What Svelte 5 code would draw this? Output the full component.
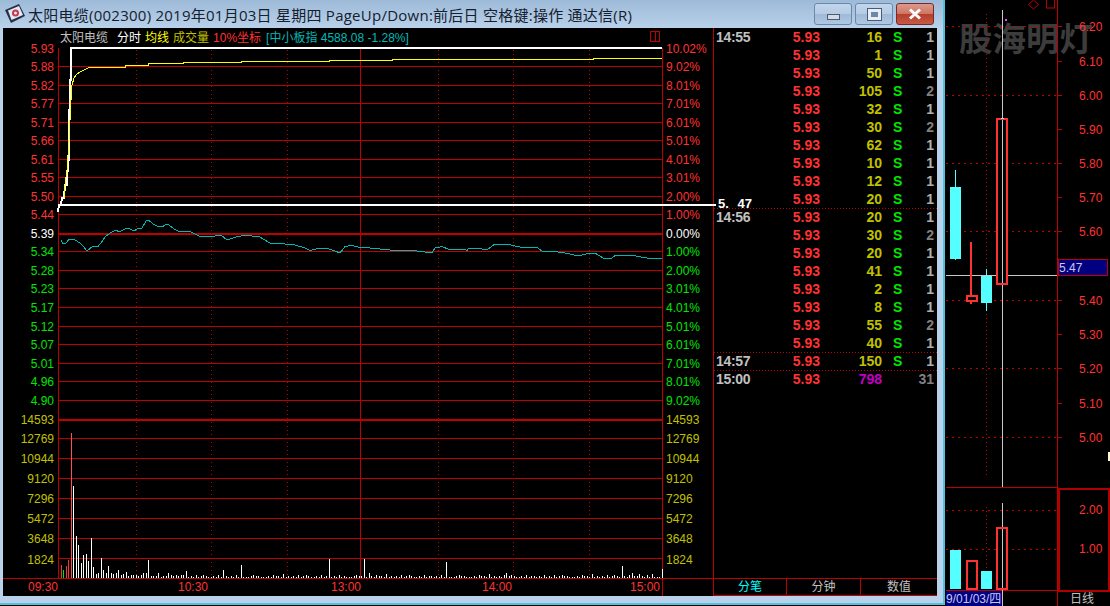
<script>
  const hLines = [66, 85, 103, 122, 140, 159, 177, 196, 214, 251, 270, 288, 307, 326, 344, 363, 381, 400, 438, 458, 478, 498, 518, 538, 558];
  const dotted = [136, 211, 287, 438, 513, 589];

  const prices = [
    ['5.93', 49, 'up'], ['5.88', 67, 'up'], ['5.82', 86, 'up'], ['5.77', 104, 'up'], ['5.71', 123, 'up'],
    ['5.66', 141, 'up'], ['5.61', 160, 'up'], ['5.55', 178, 'up'], ['5.50', 197, 'up'], ['5.44', 215, 'up'],
    ['5.39', 234, 'flat'], ['5.34', 252, 'down'], ['5.28', 271, 'down'], ['5.23', 289, 'down'], ['5.17', 308, 'down'],
    ['5.12', 327, 'down'], ['5.07', 345, 'down'], ['5.01', 364, 'down'], ['4.96', 382, 'down'], ['4.90', 401, 'down']
  ];
  const percents = ['10.02%', '9.02%', '8.01%', '7.01%', '6.01%', '5.01%', '4.01%', '3.01%', '2.00%', '1.00%', '0.00%', '1.00%', '2.00%', '3.01%', '4.01%', '5.01%', '6.01%', '7.01%', '8.01%', '9.02%'];
  const volumes = [['14593', 420], ['12769', 439], ['10944', 459], ['9120', 479], ['7296', 499], ['5472', 519], ['3648', 539], ['1824', 560]];
  const times = [['09:30', 28], ['10:30', 178], ['13:00', 331], ['14:00', 482], ['15:00', 630]];

  const avgLine = '64,198 65,185 67,170 69,140 71,100 72,85 74,78 77,74 82,71 88,68 92,67 125,67 125,65 148,65 148,63 183,63 183,62 241,62 241,61 329,61 329,60 392,60 392,59 593,59 593,58 662,58';
  const priceLine = '58,212 59,205 61,205 62,198 64,198 65,185 67,185 68,160 69,160 69,110 70,110 70,80 71,80 71,48 662,48';
  const indexLine = '61,240 63,244 66,243 69,239.5 75,240 80,243 84,247 87,251 93,246 98,246.5 101,243 105,237 110,233 115,230.5 120,231.5 126,228.5 130,229 134,231 138,228.5 142,228 146,221 149,220.5 153,224 157,226 163,226.5 166,224 169,225 174,229 179,231.5 184,231.5 189,231 194,233.5 199,236 214,236.5 218,235 221,235 227,240 232,238.5 237,236.5 245,235.5 259,236.5 263,239 270,243 279,243.5 285,244 295,245 305,248 310,250.5 318,248.5 327,248.5 335,251 340,253 345,246.5 352,245.5 358,247 370,248 390,250 417,251 432,253 435,248 442,246.5 448,249 465,249 467,250.5 469,248 482,249 488,249 495,244 507,244 513,245.5 522,247.5 537,247.5 542,251 553,251.5 563,252.5 574,255 582,255 590,253 595,253 603,258 611,259 615,255.5 633,255.5 647,258 662,258';

  // first bars by hand, the long quiet part of the day from a digit string
  const firstBars = [13, 8, 12, 18, 145, 92, 42, 33, 15, 23, 24, 17, 40, 11, 4, 5, 20, 8, 5, 12, 5, 4, 5, 8, 3, 4, 6, 2, 3, 3, 3, 2, 3, 5, 5, 18, 2, 2, 2, 5, 1, 2, 2, 5, 3, 2, 3, 2, 3, 3];
  const quiet = '12132214121213123211213122121312111232211';
  const peaks = { 186: 7, 224: 8, 242: 13, 330: 19, 363: 19, 368: 5, 446: 16, 506: 5, 554: 3, 622: 12, 632: 5, 640: 4, 652: 4, 662: 9 };
  const heights = Array.from({ length: 241 }, (_, i) => (i < firstBars.length ? firstBars[i] : Number(quiet[i % quiet.length])));
  for (const x in peaks) heights[Math.round((x - 61) / 2.505)] = peaks[x];
  const bars = heights.map((h, i) => ({
    x: Math.floor(61 + i * 2.505),
    h,
    color: i === 1 ? '#00e600' : i === 0 || i === 2 || i === 3 ? '#ff3232' : i === 4 ? '#ff5050' : '#ffffff'
  }));

  const ticks = [
    ['14:55', 16, 1], ['', 1, 1], ['', 50, 1], ['', 105, 2], ['', 32, 1], ['', 30, 2], ['', 62, 1], ['', 10, 1], ['', 12, 1], ['', 20, 1],
    ['14:56', 20, 1], ['', 30, 2], ['', 20, 1], ['', 41, 1], ['', 2, 1], ['', 8, 1], ['', 55, 2], ['', 40, 1],
    ['14:57', 150, 1]
  ];

  const dayPrices = [['6.20', 27], ['6.10', 62], ['6.00', 96], ['5.90', 130], ['5.80', 164], ['5.70', 198], ['5.60', 232], ['5.40', 301], ['5.30', 335], ['5.20', 369], ['5.10', 404], ['5.00', 438]];
  const dayDots = [26, 95, 163, 231, 300, 368, 437, 510, 549];
</script>

<div class="screen">
  <div class="window">
    <header class="titlebar">
      <svg class="app-icon" viewBox="0 0 20 20" width="20" height="20">
        <path d="M0 6 L14 0 L20 12 L6 19 Z" fill="#24304a" />
        <path d="M3 6.500 L14 2 L18 11 L6.500 16 Z" fill="#e4e8f2" />
        <circle cx="10.500" cy="9" r="3.500" fill="#c43a50" />
        <circle cx="10.500" cy="9" r="1.500" fill="#f6e8ec" />
      </svg>
      <span class="title">太阳电缆(002300) 2019年01月03日 星期四 PageUp/Down:前后日 空格键:操作 通达信(R)</span>
      <div class="controls">
        <div class="btn"><i class="min"></i></div>
        <div class="btn"><i class="max"></i></div>
        <div class="btn close">
          <svg viewBox="0 0 14 12" width="14" height="12"><path d="M2 1.500 L12 10.500 M12 1.500 L2 10.500" stroke="#fff" stroke-width="3" /></svg>
        </div>
      </div>
    </header>

    <div class="main">
      <section class="chart">
        <div class="legend">
          <span class="gray name">太阳电缆</span>
          <span class="white">分时</span>
          <span class="yellow">均线</span>
          <span class="olive">成交量</span>
          <span class="red">10%坐标</span>
          <span class="teal">[中小板指 4588.08 -1.28%]</span>
          <i class="split"></i>
        </div>
        <svg class="plot" viewBox="3 28 710 568" width="710" height="568">
          <g class="grid">
            {#each hLines as y}
              <line x1="58" x2="662" y1={y + 0.5} y2={y + 0.5} />
            {/each}
            <line x1="58" x2="662" y1="234" y2="234" stroke-width="2" />
            <line x1="58" x2="662" y1="420" y2="420" stroke-width="2" />
            <line x1="3" x2="713" y1="578.500" y2="578.500" />
            <line x1="58.500" x2="58.500" y1="48" y2="578" />
            <line x1="662.500" x2="662.500" y1="48" y2="596" />
            <line x1="360.500" x2="360.500" y1="48" y2="578" />
            {#each dotted as x}
              <line class="dot" x1={x + 0.5} x2={x + 0.5} y1="50" y2="578" />
            {/each}
          </g>

          {#each bars as b}
            <rect x={b.x} y={578 - b.h} width="1" height={b.h} fill={b.color} />
          {/each}

          <polyline class="line" points={indexLine} stroke="#00b8b8" />
          <polyline class="line" points={priceLine} stroke="#ffffff" stroke-width="2" />
          <polyline class="line" points={avgLine} stroke="#ffff00" />
          <rect x="58" y="204" width="604" height="2" fill="#ffffff" />

          <g class="labels">
            {#each prices as [text, y, dir], i}
              <text x="54" y={y + 4} text-anchor="end" class={dir}>{text}</text>
              <text x="666" y={y + 4} class={dir}>{percents[i]}</text>
            {/each}
            {#each volumes as [text, y]}
              <text x="54" y={y + 4} text-anchor="end" class="vol">{text}</text>
              <text x="666" y={y + 4} class="vol">{text}</text>
            {/each}
            {#each times as [text, x]}
              <text {x} y="591" class="up">{text}</text>
            {/each}
          </g>
        </svg>
      </section>

      <section class="ticks">
        <div class="rows">
          {#each ticks as [time, vol, count], i}
            <div class="row" class:sep={time && i > 0}>
              <span class="time">{time}</span>
              <span class="price">5.93</span>
              <span class="volume">{vol}</span>
              <span class="side">S</span>
              <span class="count" class:dim={count > 1}>{count}</span>
            </div>
          {/each}
          <div class="row sep">
            <span class="time">15:00</span>
            <span class="price">5.93</span>
            <span class="volume total">798</span>
            <span class="side"></span>
            <span class="count dim">31</span>
          </div>
        </div>
        <div class="tabs">
          <span class="tab active">分笔</span>
          <span class="tab">分钟</span>
          <span class="tab">数值</span>
        </div>
      </section>

      <div class="last-price">5. 47</div>
    </div>
  </div>

  <svg class="daily" viewBox="945 0 165 606" width="165" height="606">
    <text x="959" y="51" class="mark">股海明灯</text>

    <g class="grid">
      {#each dayDots as y}
        <line class="dot2" x1="946" x2="1057" y1={y + 0.5} y2={y + 0.5} />
      {/each}
      <line class="dot" x1="986.500" x2="986.500" y1="14" y2="475" />
      <line class="dot" x1="986.500" x2="986.500" y1="507" y2="590" />
      <line x1="946" x2="1058" y1="487.500" y2="487.500" />
      <line x1="946" x2="1110" y1="590.500" y2="590.500" />
      <line x1="1057.500" x2="1057.500" y1="0" y2="606" />
      {#each dayPrices as [, y]}
        <line x1="1058" x2="1062" y1={y - 0.5} y2={y - 0.5} />
      {/each}
      <rect class="box" x="1058.500" y="488.500" width="50" height="102" />
    </g>

    <line class="cross" x1="1002.500" x2="1002.500" y1="10" y2="487" />
    <line class="cross" x1="1002.500" x2="1002.500" y1="503" y2="606" />
    <line class="cross" x1="946" x2="1057" y1="275.500" y2="275.500" />

    <!-- candles -->
    <rect x="955" y="170" width="1" height="90" fill="#55ffff" />
    <rect x="950" y="187" width="11" height="72" fill="#55ffff" />
    <rect x="970" y="242" width="2" height="62" fill="#ff3232" />
    <rect class="hollow" x="966.500" y="296" width="10" height="5" />
    <rect x="986" y="269" width="1" height="42" fill="#55ffff" />
    <rect x="981" y="276" width="11" height="27" fill="#55ffff" />
    <rect class="hollow" x="997" y="119" width="10" height="165" />
    <rect x="1001" y="118" width="3" height="1" fill="#55ffff" />
    <line class="cross" x1="1002.500" x2="1002.500" y1="120" y2="283" />

    <!-- volume -->
    <rect x="950" y="550" width="11" height="39" fill="#55ffff" />
    <rect class="hollow" x="966.500" y="561" width="10" height="28" />
    <rect x="981" y="571" width="11" height="18" fill="#55ffff" />
    <rect class="hollow" x="997" y="528" width="10" height="61" />
    <line class="cross" x1="1002.500" x2="1002.500" y1="529" y2="588" />

    <path class="outline" d="M1033.500 0 L1038.500 4.500 L1033.500 9 L1028.500 4.500 Z" />
    <rect class="outline" x="1046.500" y="-2" width="8" height="10" />
    <rect x="1005" y="19" width="2" height="2" fill="#ff40ff" />

    <g class="labels">
      {#each dayPrices as [text, y]}
        <text x="1079" y={y + 4} class="up">{text}</text>
      {/each}
      <text x="1079" y="514" class="up">2.00</text>
      <text x="1079" y="553" class="up">1.00</text>
    </g>

    <rect class="tag" x="1058.500" y="259.500" width="49" height="16" />
    <text x="1059" y="272" class="tag-text">5.47</text>
    <rect x="946" y="591" width="56" height="15" fill="#000080" />
    <text x="946" y="603" class="tag-text">9/01/03/四</text>
    <text x="1070" y="603" class="period">日线</text>
    <rect x="1108" y="452" width="2" height="9" fill="#fff8d0" />
  </svg>
</div>

<style>
  :global(body) {
    margin: 0;
    background: #000;
  }

  .screen {
    display: flex;
    width: 1110px;
    height: 606px;
    overflow: hidden;
    background: #000;
    font-family: "Liberation Sans", "Noto Sans CJK SC", sans-serif;
  }

  .window {
    flex: none;
    box-sizing: border-box;
    width: 945px;
    height: 605px;
    padding: 0 6px 7px 3px;
    background: #b9d1ea;
    border-right: 2px solid #4fc3dc;
    border-bottom: 2px solid #4fc3dc;
  }

  .titlebar {
    position: relative;
    display: flex;
    align-items: center;
    height: 28px;
    margin: 0 -6px 0 -3px;
    padding-left: 5px;
    background: linear-gradient(#9dbad8, #b9d1ea);
  }

  .app-icon {
    flex: none;
    margin-right: 3px;
  }

  .title {
    font-family: "Open Sans", "Noto Sans CJK SC", sans-serif;
    font-size: 15px;
    letter-spacing: 0.25px;
    color: #14202e;
    white-space: nowrap;
  }

  .controls {
    position: absolute;
    top: 3px;
    right: 9px;
    display: flex;
    gap: 3px;
  }

  .btn {
    display: flex;
    align-items: center;
    justify-content: center;
    box-sizing: border-box;
    width: 38px;
    height: 22px;
    border: 1px solid #6c88a8;
    border-radius: 3px;
    background: linear-gradient(#c2d6eb 0%, #b4cbe4 50%, #9fb9d6 52%, #afc8e4 100%);
  }

  .btn.close {
    border-color: #7a2a24;
    background: linear-gradient(#dc9a8c 0%, #cf7663 48%, #b63e2c 52%, #c65a44 100%);
  }

  .min {
    box-sizing: border-box;
    width: 13px;
    height: 6px;
    margin-top: 5px;
    border: 1px solid #4a5c74;
    background: #d4dae2;
  }

  .max {
    box-sizing: border-box;
    width: 13px;
    height: 11px;
    border: 3px solid #e6edf5;
    outline: 1px solid #4a5c74;
    background: #6d88a6;
  }

  .main {
    position: relative;
    display: flex;
    height: 568px;
    background: #000;
  }

  .chart {
    position: relative;
    flex: none;
    width: 710px;
  }

  .plot {
    display: block;
  }

  .legend {
    position: absolute;
    top: 3px;
    left: 57px;
    right: 50px;
    display: flex;
    gap: 4px;
    font-size: 12px;
    line-height: 14px;
    white-space: nowrap;
  }

  .name {
    margin-right: 5px;
  }

  .gray { color: #c0c0c0; }
  .white { color: #fff; }
  .yellow { color: #ffff00; }
  .olive { color: #c0c000; }
  .red { color: #ff3232; }
  .teal { color: #00b8b8; margin-left: 1px; }

  .split {
    position: absolute;
    top: 0;
    left: 590px;
    width: 8px;
    height: 9px;
    border: 1px solid #c00000;
    background: linear-gradient(#c00000, #c00000) center / 1px 100% no-repeat;
  }

  .grid line {
    stroke: #c00000;
    shape-rendering: crispEdges;
  }

  .grid .dot {
    stroke-dasharray: 1 3;
  }

  .grid .dot2 {
    stroke-dasharray: 2 4;
  }

  .grid .box {
    fill: none;
    stroke: #b00000;
    stroke-width: 2;
    shape-rendering: crispEdges;
  }

  .line {
    fill: none;
    shape-rendering: crispEdges;
  }

  .labels text {
    font-size: 12px;
  }

  .up { fill: #ff3232; }
  .flat { fill: #fff; }
  .down { fill: #00e600; }
  .vol { fill: #c0c000; }

  .ticks {
    display: flex;
    flex-direction: column;
    flex: 1;
    box-sizing: border-box;
    border-left: 1px solid #c00000;
    font-size: 14px;
    font-weight: 700;
  }

  .rows {
    flex: 1;
  }

  .row {
    display: grid;
    grid-template-columns: 36px 68px 62px 32px 1fr;
    box-sizing: border-box;
    height: 18px;
    padding-left: 2px;
    line-height: 18px;
  }

  .row.sep {
    background: repeating-linear-gradient(90deg, #c00000 0 1px, transparent 1px 3px) top / 100% 1px no-repeat;
  }

  .time {
    color: #c0c0c0;
    letter-spacing: -0.3px;
  }

  .price {
    text-align: right;
    color: #ff3232;
  }

  .volume {
    text-align: right;
    color: #c0c000;
  }

  .volume.total {
    color: #c000c0;
  }

  .side {
    padding-left: 11px;
    color: #00e600;
  }

  .count {
    padding-right: 3px;
    text-align: right;
    color: #b0b0b0;
  }

  .count.dim {
    color: #808080;
  }

  .tabs {
    display: grid;
    grid-template-columns: 73px 74px 1fr;
    height: 18px;
    border-top: 1px solid #c00000;
    border-bottom: 1px solid #c00000;
    box-sizing: border-box;
  }

  .tab {
    text-align: center;
    font-size: 12px;
    font-weight: 400;
    line-height: 16px;
    color: #c0c0c0;
    border-right: 1px solid #c00000;
  }

  .tab:last-child {
    border-right: 0;
  }

  .tab.active {
    color: #00ffff;
  }

  .last-price {
    position: absolute;
    top: 169px;
    left: 715px;
    font-size: 13px;
    font-weight: 700;
    line-height: 14px;
    color: #fff;
    white-space: pre;
    word-spacing: 5px;
  }

  .last-price::before {
    content: "";
    position: absolute;
    top: 7px;
    left: -56px;
    width: 54px;
    height: 2px;
    background: #fff;
  }

  .daily {
    flex: none;
    display: block;
  }

  .mark {
    font-family: "Noto Sans CJK SC", sans-serif;
    font-size: 33.500px;
    font-weight: 700;
    fill: #3c3c3c;
  }

  .cross {
    stroke: #c8c8c8;
    shape-rendering: crispEdges;
  }

  .hollow {
    fill: #000;
    stroke: #ff3232;
    stroke-width: 2;
    shape-rendering: crispEdges;
  }

  .outline {
    fill: none;
    stroke: #c00000;
  }

  .tag {
    fill: #000080;
    stroke: #c00000;
    shape-rendering: crispEdges;
  }

  .tag-text {
    font-size: 12px;
    fill: #c8c8f0;
  }

  .period {
    font-size: 12px;
    fill: #c0c0c0;
  }
</style>
